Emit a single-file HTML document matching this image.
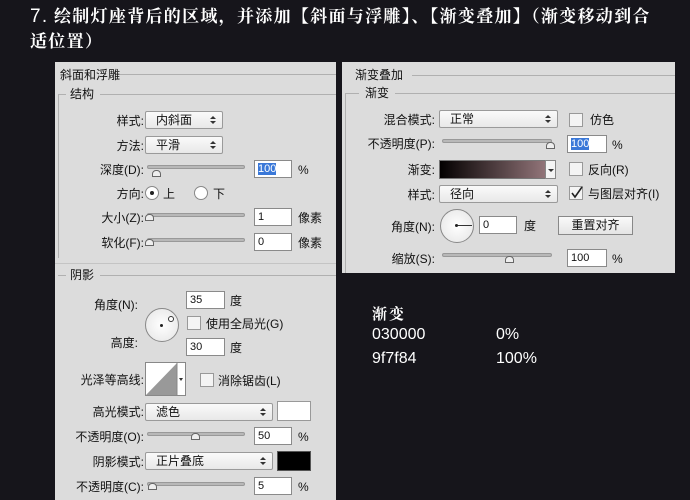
<!DOCTYPE html>
<html><head><meta charset="utf-8"><style>
*{margin:0;padding:0;box-sizing:border-box}
body{width:690px;height:500px;background:#16151b;position:relative;overflow:hidden;font-family:"Liberation Sans","Noto Sans CJK SC",sans-serif;font-size:12px;color:#111}
.a{position:absolute}
.h{color:#fff;font-family:"Liberation Serif","Noto Serif CJK SC",serif;font-weight:bold;font-size:17px;letter-spacing:1.3px;line-height:25px;left:30px;width:665px}
.panel{background:#dcdcdc}
.lbl{position:absolute;text-align:right;white-space:nowrap;line-height:14px}
.inp{position:absolute;background:#fff;border:1px solid #8a8a8a;height:18px;padding-left:3px;line-height:16px;font-size:11px}
.sel{position:absolute;background:linear-gradient(#fafafa,#e8e8e8);border:1px solid #9a9a9a;border-radius:2px;height:18px;padding-left:10px;line-height:16px}
.sel:after{content:"";position:absolute;right:6px;top:4px;width:0;height:0;border-left:3px solid transparent;border-right:3px solid transparent;border-bottom:3px solid #333}
.sel i{position:absolute;right:6px;top:9px;border-left:3px solid transparent;border-right:3px solid transparent;border-top:3px solid #333}
.sl{position:absolute;height:4px;background:#b8b8b8;border:1px solid #999;border-radius:2px}
.th{position:absolute;width:9px;height:7px;border:1px solid #666;background:#eee;border-radius:4px 4px 0 0}
.cb{position:absolute;width:14px;height:14px;background:#f4f4f4;border:1px solid #999}
.rule{position:absolute;height:1px;background:#b0b0b0}
.white{color:#fff}
</style></head><body>
<div class="a h" style="top:4px"><span style="font-family:'Liberation Sans',sans-serif;font-size:19px;font-weight:normal">7.</span> 绘制灯座背后的区域，并添加【斜面与浮雕】、【渐变叠加】（渐变移动到合<br>适位置）</div>

<!-- left panel -->
<div class="a panel" style="left:55px;top:62px;width:281px;height:438px"></div>
<div class="rule" style="left:118px;top:74px;width:218px"></div>
<div class="lbl" style="left:60px;top:68px">斜面和浮雕</div>
<div class="rule" style="left:58px;top:94px;width:8px"></div>
<div class="rule" style="left:100px;top:94px;width:236px"></div>
<div class="a" style="left:58px;top:94px;width:1px;height:164px;background:#b0b0b0"></div>
<div class="lbl" style="left:70px;top:87px">结构</div>

<div class="lbl" style="right:546px;top:114px">样式:</div>
<div class="sel" style="left:145px;top:111px;width:78px">内斜面<i></i></div>
<div class="lbl" style="right:546px;top:139px">方法:</div>
<div class="sel" style="left:145px;top:136px;width:78px">平滑<i></i></div>
<div class="lbl" style="right:546px;top:163px">深度(D):</div>
<div class="sl" style="left:147px;top:165px;width:98px"></div>
<div class="th" style="left:152px;top:170px"></div>
<div class="inp" style="left:254px;top:160px;width:38px"><span style="background:#3a78d8;color:#fff">100</span></div>
<div class="lbl" style="left:298px;top:163px">%</div>
<div class="lbl" style="right:546px;top:187px">方向:</div>
<div class="a" style="left:145px;top:186px;width:14px;height:14px;border-radius:50%;border:1px solid #888;background:#fff"><div class="a" style="left:4px;top:4px;width:4px;height:4px;border-radius:50%;background:#222"></div></div>
<div class="lbl" style="left:163px;top:187px">上</div>
<div class="a" style="left:194px;top:186px;width:14px;height:14px;border-radius:50%;border:1px solid #888;background:#fff"></div>
<div class="lbl" style="left:213px;top:187px">下</div>
<div class="lbl" style="right:546px;top:211px">大小(Z):</div>
<div class="sl" style="left:147px;top:213px;width:98px"></div>
<div class="th" style="left:145px;top:214px"></div>
<div class="inp" style="left:254px;top:208px;width:38px">1</div>
<div class="lbl" style="left:298px;top:211px">像素</div>
<div class="lbl" style="right:546px;top:236px">软化(F):</div>
<div class="sl" style="left:147px;top:238px;width:98px"></div>
<div class="th" style="left:145px;top:239px"></div>
<div class="inp" style="left:254px;top:233px;width:38px">0</div>
<div class="lbl" style="left:298px;top:236px">像素</div>

<div class="rule" style="left:55px;top:263px;width:281px;background:#c4c4c4"></div>
<div class="rule" style="left:58px;top:275px;width:8px"></div>
<div class="rule" style="left:100px;top:275px;width:236px"></div>
<div class="lbl" style="left:70px;top:268px">阴影</div>
<div class="lbl" style="right:552px;top:298px">角度(N):</div>
<div class="a" style="left:145px;top:308px;width:34px;height:34px;border-radius:50%;border:1px solid #888;background:radial-gradient(#fff,#e4e4e4)"><div class="a" style="left:14px;top:15px;width:3px;height:3px;border-radius:50%;background:#222"></div><div class="a" style="left:22px;top:7px;width:6px;height:6px;border-radius:50%;border:1px solid #333;background:#fff"></div></div>
<div class="inp" style="left:186px;top:291px;width:39px">35</div>
<div class="lbl" style="left:230px;top:294px">度</div>
<div class="cb" style="left:187px;top:316px"></div>
<div class="lbl" style="left:206px;top:317px">使用全局光(G)</div>
<div class="lbl" style="right:552px;top:336px">高度:</div>
<div class="inp" style="left:186px;top:338px;width:39px">30</div>
<div class="lbl" style="left:230px;top:341px">度</div>
<div class="lbl" style="right:546px;top:373px">光泽等高线:</div>
<div class="a" style="left:145px;top:362px;width:41px;height:34px;border:1px solid #888;background:#fff">
<svg width="39" height="32" style="position:absolute;left:0;top:0"><polygon points="0,32 31,0 31,32" fill="#999"/><line x1="31" y1="0" x2="31" y2="32" stroke="#888"/><polygon points="33,15 37,15 35,18" fill="#333"/></svg></div>
<div class="cb" style="left:200px;top:373px"></div>
<div class="lbl" style="left:218px;top:374px">消除锯齿(L)</div>
<div class="lbl" style="right:546px;top:405px">高光模式:</div>
<div class="sel" style="left:145px;top:403px;width:128px">滤色<i></i></div>
<div class="a" style="left:277px;top:401px;width:34px;height:20px;background:#fff;border:1px solid #999"></div>
<div class="lbl" style="right:546px;top:430px">不透明度(O):</div>
<div class="sl" style="left:147px;top:432px;width:98px"></div>
<div class="th" style="left:191px;top:433px"></div>
<div class="inp" style="left:254px;top:427px;width:38px">50</div>
<div class="lbl" style="left:298px;top:430px">%</div>
<div class="lbl" style="right:546px;top:455px">阴影模式:</div>
<div class="sel" style="left:145px;top:452px;width:128px">正片叠底<i></i></div>
<div class="a" style="left:277px;top:451px;width:34px;height:20px;background:#000;border:1px solid #555"></div>
<div class="lbl" style="right:546px;top:480px">不透明度(C):</div>
<div class="sl" style="left:147px;top:482px;width:98px"></div>
<div class="th" style="left:148px;top:483px"></div>
<div class="inp" style="left:254px;top:477px;width:38px">5</div>
<div class="lbl" style="left:298px;top:480px">%</div>

<!-- right panel -->
<div class="a panel" style="left:342px;top:62px;width:333px;height:211px"></div>
<div class="rule" style="left:412px;top:75px;width:263px"></div>
<div class="lbl" style="left:355px;top:68px">渐变叠加</div>
<div class="rule" style="left:345px;top:93px;width:14px"></div>
<div class="rule" style="left:395px;top:93px;width:280px"></div>
<div class="a" style="left:345px;top:93px;width:1px;height:180px;background:#b0b0b0"></div>
<div class="lbl" style="left:365px;top:86px">渐变</div>
<div class="lbl" style="right:255px;top:113px">混合模式:</div>
<div class="sel" style="left:439px;top:110px;width:119px">正常<i></i></div>
<div class="cb" style="left:569px;top:113px"></div>
<div class="lbl" style="left:590px;top:113px">仿色</div>
<div class="lbl" style="right:255px;top:137px">不透明度(P):</div>
<div class="sl" style="left:442px;top:139px;width:110px"></div>
<div class="th" style="left:546px;top:142px"></div>
<div class="inp" style="left:567px;top:135px;width:40px"><span style="background:#3a78d8;color:#fff">100</span></div>
<div class="lbl" style="left:612px;top:138px">%</div>
<div class="lbl" style="right:255px;top:163px">渐变:</div>
<div class="a" style="left:439px;top:160px;width:117px;height:19px;border:1px solid #777;background:linear-gradient(90deg,#030000,#9f7f84)"></div>
<div class="a" style="left:545px;top:160px;width:11px;height:19px;background:#f4f4f4;border:1px solid #888"><div class="a" style="left:2px;top:8px;border-left:3px solid transparent;border-right:3px solid transparent;border-top:3px solid #333"></div></div>
<div class="cb" style="left:569px;top:162px"></div>
<div class="lbl" style="left:588px;top:163px">反向(R)</div>
<div class="lbl" style="right:255px;top:188px">样式:</div>
<div class="sel" style="left:439px;top:185px;width:119px">径向<i></i></div>
<div class="cb" style="left:569px;top:186px"><svg width="14" height="14" style="position:absolute;left:0;top:-2px"><path d="M2 8 L5 12 L12 2" stroke="#222" stroke-width="1.6" fill="none"/></svg></div>
<div class="lbl" style="left:588px;top:187px">与图层对齐(I)</div>
<div class="lbl" style="right:255px;top:220px">角度(N):</div>
<div class="a" style="left:440px;top:209px;width:34px;height:34px;border-radius:50%;border:1px solid #888;background:radial-gradient(#fff,#e4e4e4)"><div class="a" style="left:15px;top:15px;width:16px;height:1px;background:#333"></div><div class="a" style="left:14px;top:14px;width:3px;height:3px;border-radius:50%;background:#222"></div></div>
<div class="inp" style="left:479px;top:216px;width:38px">0</div>
<div class="lbl" style="left:524px;top:219px">度</div>
<div class="a" style="left:558px;top:216px;width:75px;height:19px;border:1px solid #888;background:linear-gradient(#fafafa,#e4e4e4);text-align:center;line-height:17px">重置对齐</div>
<div class="lbl" style="right:255px;top:252px">缩放(S):</div>
<div class="sl" style="left:442px;top:253px;width:110px"></div>
<div class="th" style="left:505px;top:256px"></div>
<div class="inp" style="left:567px;top:249px;width:40px">100</div>
<div class="lbl" style="left:612px;top:252px">%</div>

<!-- text -->
<div class="a white" style="left:372px;top:303px;font-family:'Liberation Serif','Noto Serif CJK SC',serif;font-weight:bold;font-size:15px;letter-spacing:2px">渐变</div>
<div class="a white" style="left:372px;top:326px;font-size:16px">030000</div>
<div class="a white" style="left:496px;top:326px;font-size:16px">0%</div>
<div class="a white" style="left:372px;top:350px;font-size:16px">9f7f84</div>
<div class="a white" style="left:496px;top:350px;font-size:16px">100%</div>
</body></html>
